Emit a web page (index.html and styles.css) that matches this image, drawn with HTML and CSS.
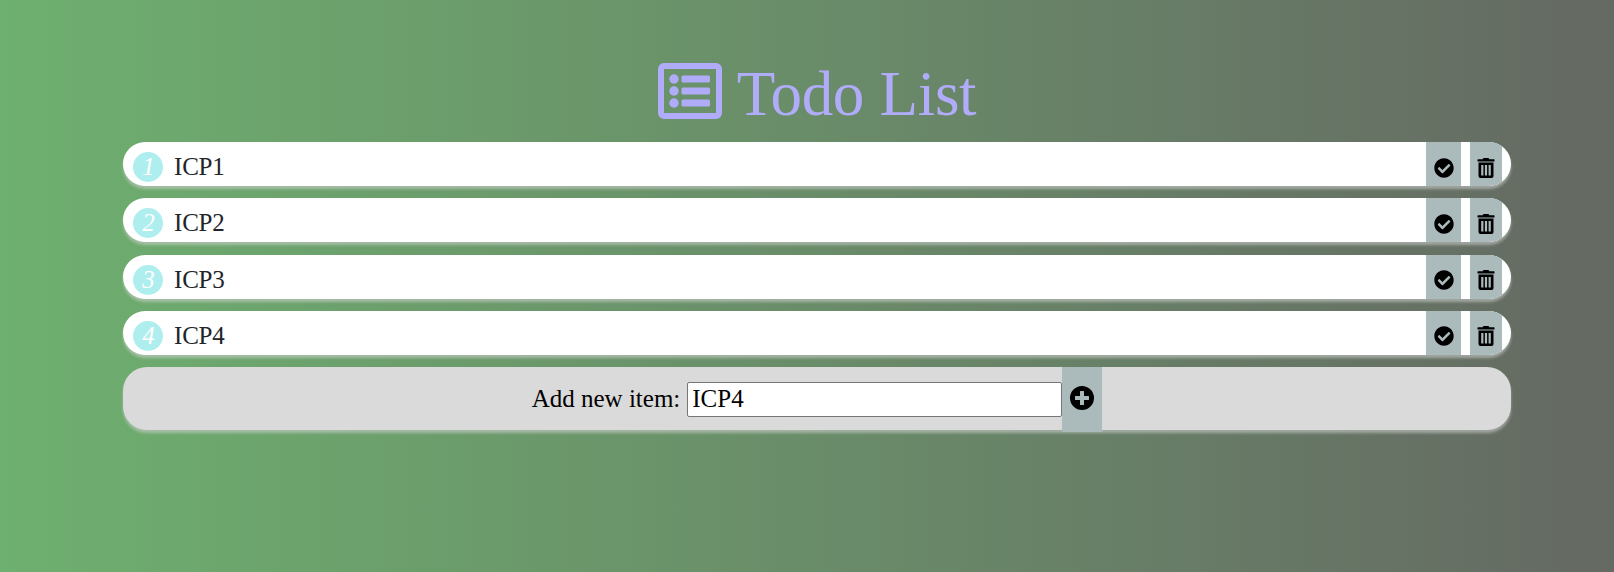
FILE: index.html
```
<!DOCTYPE html>
<html lang="en">
<head>
<meta charset="utf-8">
<title>Todo List</title>
<link rel="stylesheet" href="styles.css">
</head>
<body>
<svg class="sprite" aria-hidden="true">
  <symbol id="check" viewBox="0 0 512 512"><path d="M504 256c0 137-111 248-248 248S8 393 8 256 119 8 256 8s248 111 248 248zM227.300 387.300l184-184c6.200-6.200 6.200-16.400 0-22.600l-22.600-22.600c-6.200-6.200-16.400-6.200-22.600 0L216 308.100l-70.100-70.100c-6.200-6.200-16.400-6.200-22.600 0l-22.600 22.600c-6.200 6.200-6.200 16.400 0 22.600l104 104c6.200 6.300 16.400 6.300 22.600.1z"/></symbol>
  <symbol id="trash" viewBox="0 0 18 20"><path fill-rule="evenodd" d="M1 1.200h4.500L6.500 0h5l1 1.200H17a.5.5 0 0 1 .5.5v1.800H.5V1.700a.5.5 0 0 1 .5-.5zM1.500 4.500h15v13.500a2 2 0 0 1-2 2h-11a2 2 0 0 1-2-2zM4.200 7v10.500h2.200V7zM7.900 7v10.500h2.200V7zM11.600 7v10.500h2.200V7z"/></symbol>
</svg>
<main class="todo">
  <h1 class="title">
    <svg class="title-icon" viewBox="0 0 64 56"><rect x="3" y="3" width="58" height="50" rx="3" fill="none" stroke="currentColor" stroke-width="6"/><circle cx="16" cy="16" r="4.700"/><circle cx="16" cy="28" r="4.700"/><circle cx="16" cy="40" r="4.700"/><rect x="23.500" y="12.500" width="28.500" height="7" rx="1.500"/><rect x="23.500" y="24.500" width="28.500" height="7" rx="1.500"/><rect x="23.500" y="36.500" width="28.500" height="7" rx="1.500"/></svg>
    <span>Todo List</span>
  </h1>
  <ul class="list">
    <li class="item"><i class="number">1</i><span class="name">ICP1</span><button class="action done"><svg><use href="#check"/></svg></button><button class="action remove"><svg><use href="#trash"/></svg></button></li>
    <li class="item"><i class="number">2</i><span class="name">ICP2</span><button class="action done"><svg><use href="#check"/></svg></button><button class="action remove"><svg><use href="#trash"/></svg></button></li>
    <li class="item"><i class="number">3</i><span class="name">ICP3</span><button class="action done"><svg><use href="#check"/></svg></button><button class="action remove"><svg><use href="#trash"/></svg></button></li>
    <li class="item"><i class="number">4</i><span class="name">ICP4</span><button class="action done"><svg><use href="#check"/></svg></button><button class="action remove"><svg><use href="#trash"/></svg></button></li>
  </ul>
  <form class="add">
    <label for="new-item">Add new item:</label>
    <input id="new-item" class="field" type="text" value="ICP4">
    <button class="plus" type="button"><svg viewBox="0 0 24 24"><path fill-rule="evenodd" d="M12 0a12 12 0 1 0 0 24 12 12 0 0 0 0-24zM10.500 5h3a.5.5 0 0 1 .5.5V10h4.500a.5.5 0 0 1 .5.5v3a.5.5 0 0 1-.5.5H14v4.500a.5.5 0 0 1-.5.5h-3a.5.5 0 0 1-.5-.5V14H5.500a.5.5 0 0 1-.5-.5v-3a.5.5 0 0 1 .5-.5H10V5.500a.5.5 0 0 1 .5-.5z"/></svg></button>
  </form>
</main>
</body>
</html>
```
FILE: styles.css
```
* { box-sizing: border-box; }
body {
  margin: 0;
  min-height: 572px;
  background: linear-gradient(to right, #6eb06f, #656963);
  font: 25px "Liberation Serif", "Times New Roman", serif;
}
.sprite { display: none; }
svg { display: block; fill: currentColor; }
.todo { width: 1388px; margin-left: 123px; padding-top: 55px; }
.title {
  display: flex;
  justify-content: center;
  gap: 15px;
  height: 87px;
  margin: 0;
  color: #b0acfa;
  font-size: 63px;
  font-weight: 400;
  line-height: 79px;
  letter-spacing: -0.300px;
}
.title-icon { width: 64px; height: 56px; margin-top: 8px; }
.list { margin: 0; padding: 0; list-style: none; }
.item {
  display: flex;
  height: 44px;
  margin-bottom: 12.330px;
  padding: 0 9px 0 10px;
  overflow: hidden;
  border-radius: 24px;
  background: #fff;
  box-shadow: 0 3px 3px rgba(211, 211, 211, .55);
  color: #212529;
}
.number {
  width: 30px;
  height: 30px;
  margin: 10px 11px 0 0;
  padding-left: 1px;
  border-radius: 50%;
  background: #afeeee;
  color: #fff;
  line-height: 30px;
  text-align: center;
}
.name { flex: 1; line-height: 50px; letter-spacing: -0.200px; }
.action, .plus { padding: 0; border: 0; background: #abbaba; color: #000; }
.action { display: flex; justify-content: center; }
.done { width: 35px; margin-right: 9px; }
.done svg { width: 20px; height: 20px; margin-top: 15.500px; }
.remove { width: 32px; }
.remove svg { width: 18px; height: 20px; margin: 15.500px 1px 0 0; }
.add {
  display: flex;
  justify-content: center;
  align-items: flex-start;
  height: 63px;
  border-radius: 24px;
  background: #dadada;
  box-shadow: 0 3px 3px rgba(211, 211, 211, .55);
}
.add label { margin-right: 7px; line-height: 64px; }
.field {
  width: 375px;
  height: 35px;
  margin-top: 15px;
  padding: 0 4px 1px;
  border: 1px solid #767676;
  border-radius: 2px;
  background: #fff;
  color: #000;
  font: inherit;
}
.plus { width: 40px; height: 65px; padding: 0 8px 4px; }
.plus svg { width: 24px; height: 24px; }
```
